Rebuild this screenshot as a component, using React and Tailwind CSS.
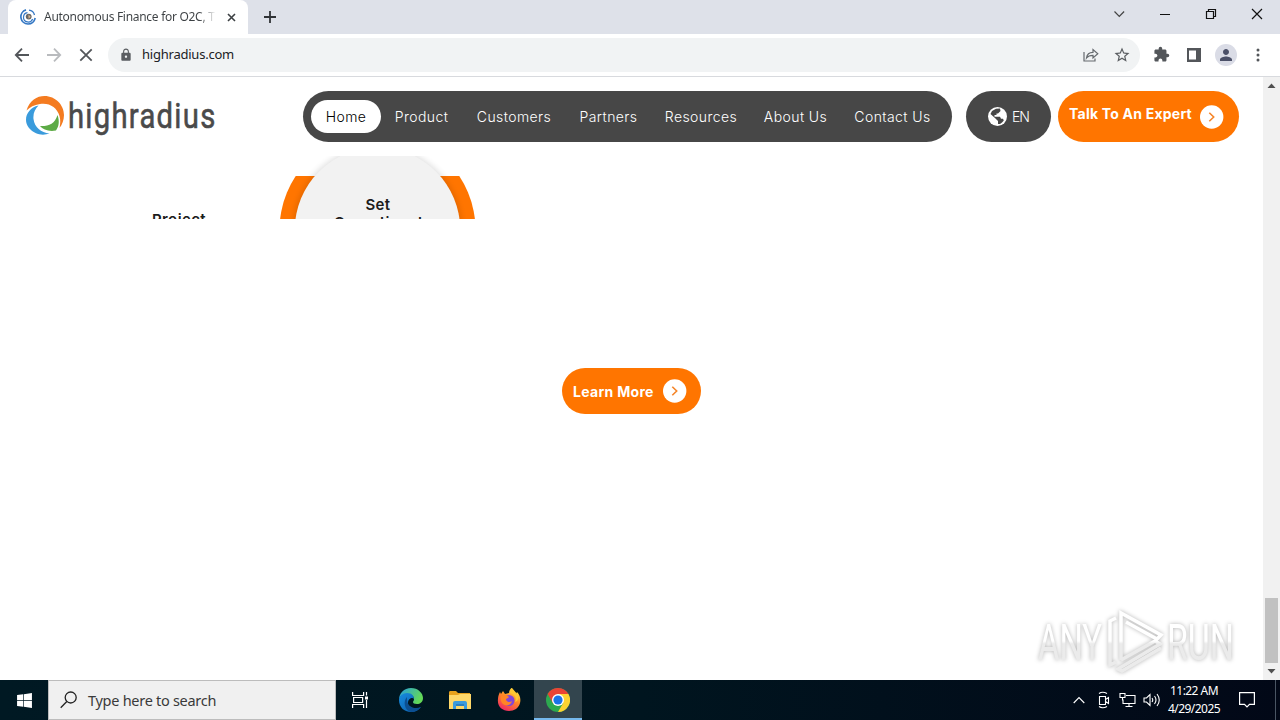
import React from 'react';
import { FaWindows } from 'react-icons/fa';
import { MdExtension, MdLock, MdPerson, MdStarBorder } from 'react-icons/md';

const navItems = [
    { label: 'Home', box: 'w-[70px] h-[33px] rounded-full bg-white text-black' },
    { label: 'Product', box: 'w-[81px] text-white' },
    { label: 'Customers', box: 'w-[104px] text-white' },
    { label: 'Partners', box: 'w-[85px] text-white' },
    { label: 'Resources', box: 'w-[100px] text-white' },
    { label: 'About Us', box: 'w-[89px] text-white' },
    { label: 'Contact Us', box: 'w-[105px] text-white' },
];

function TabStrip() {
    return (
        <div className="flex h-[34px] bg-[#dee1e9]">
            <div className="ml-2 flex h-[34px] w-[240px] items-center rounded-t-lg bg-white pl-3">
                <svg width="16" height="16" viewBox="0 0 16 16" fill="none" className="shrink-0">
                    <path d="M6 .9A7.200 7.200 0 1 0 15.200 9" stroke="#3578c4" strokeWidth="1.700" />
                    <path d="M7.500 3.700A4.700 4.700 0 1 0 12.600 10" stroke="#3578c4" strokeWidth="1.200" />
                    <path d="M9 1.200A6.500 6.500 0 0 1 14.500 6" stroke="#3578c4" strokeWidth="1.300" />
                    <circle cx="8.700" cy="7.600" r="2.900" fill="#666" />
                    <path d="M8.500 5.600l2.200 2.200-2.200 2z" fill="#d8b48c" />
                </svg>
                <div className="ml-2 w-[172px] overflow-hidden whitespace-nowrap bg-gradient-to-r from-[#3c4043] from-[90%] to-transparent bg-clip-text font-['Noto_Sans',sans-serif] text-[12px] tracking-[-0.29px] text-transparent">
                    Autonomous Finance for O2C, T
                </div>
                <svg width="9" height="9" viewBox="0 0 9 9" className="ml-[11px] shrink-0" stroke="#3c4043" strokeWidth="1.600">
                    <path d="M1 1l7 7M8 1l-7 7" />
                </svg>
            </div>
            <svg width="12" height="12" viewBox="0 0 12 12" className="ml-4 mt-[11px]" stroke="#303337" strokeWidth="1.800">
                <path d="M6 0v12M0 6h12" />
            </svg>
            <div className="ml-auto flex h-[28px] items-center">
                <svg width="166" height="28" viewBox="0 0 166 28" fill="none" stroke="#111" strokeWidth="1">
                    <path d="M0.500 11.500l4.800 5 4.800-5" stroke="#444" strokeWidth="1.200" />
                    <path d="M46 14.500h10" />
                    <path d="M92.500 11.500h7v7h-7zM94.500 11v-1.500h7v7h-1.500" strokeWidth="1.200" />
                    <path d="M138 9l10 10M148 9l-10 10" strokeWidth="1.200" />
                </svg>
            </div>
        </div>
    );
}

function Toolbar() {
    return (
        <div className="flex h-[43px] items-center border-b border-[#d8dade] bg-white pb-px">
            <svg width="80" height="16" viewBox="0 0 80 16" fill="none" className="ml-[14px] shrink-0" strokeWidth="1.800">
                <path d="M15 8H2M8 1.700L1.800 8 8 14.300" stroke="#53565a" />
                <path d="M33 8h13M40 1.700L46.200 8 40 14.300" stroke="#b9bbbe" />
                <path d="M66.300 2.300l11.400 11.400M77.700 2.300L66.300 13.700" stroke="#53565a" />
            </svg>
            <div className="ml-[14px] flex h-[34px] w-[1032px] items-center rounded-full bg-[#f1f3f4] pl-[11px] pr-[9px]">
                <MdLock size={14} color="#5a5d61" />
                <span className="ml-[9px] pt-px font-['Noto_Sans',sans-serif] text-[13px] tracking-[-0.23px] text-[#202124]">highradius.com</span>
                <svg width="16" height="14" viewBox="0 0 16 14" fill="none" stroke="#666a6e" strokeWidth="1.200" className="ml-auto">
                    <path d="M1 4v9h11v-2.500" />
                    <path d="M3.500 10C4 6 6 4.300 10 4.300V1.500l4.800 4.300L10 10V7.300C7 7.300 5 8 3.500 10z" />
                </svg>
                <MdStarBorder size={18} color="#5a5d61" className="ml-[14px]" />
            </div>
            <MdExtension size={17} color="#53565a" className="ml-[13px]" />
            <svg width="14" height="14" viewBox="0 0 14 14" className="ml-[17px]">
                <path fill="#53565a" fillRule="evenodd" d="M0 0h14v14H0zM2 2.500v9h7v-9z" />
            </svg>
            <div className="ml-[14px] flex size-[22px] items-center justify-center rounded-full bg-[#dadce6]">
                <MdPerson size={18} color="#4b5068" />
            </div>
            <svg width="4" height="14" viewBox="0 0 4 14" fill="#53565a" className="ml-[19px]">
                <circle cx="2" cy="2" r="1.500" />
                <circle cx="2" cy="7" r="1.500" />
                <circle cx="2" cy="12" r="1.500" />
            </svg>
        </div>
    );
}

function Logo() {
    return (
        <svg width="200" height="44" viewBox="0 0 200 44" className="shrink-0">
            <path d="M2.500 15.500C5.500 5.500 13 1 20.500 1 31.500 1 40 10 40 20c0 5-2 10-4.500 13 .8-4 1.200-8 0-12C33 12.500 25.500 7.500 16 9 10 10 6 12 2.500 15.500z" fill="#f47b20" />
            <path d="M14.500 10.500C3 13-1.500 25 5 33c5.500 6.500 13.500 8 20.500 5.500-8.500-1-15-6-16-14.500-.6-5.500 1.500-10 5-13.500z" fill="#3a9bdc" />
            <path d="M33.500 20c2.500 7 1 12-1.500 15.500-7 1.500-13-1-16-4.500 8 .5 15-2 17.500-11z" fill="#5dab46" />
            <text x="44" y="33" fontFamily="Roboto, sans-serif" fontSize="34.500" fontWeight="400" letterSpacing="1.500" fill="#4a4a4a" stroke="#4a4a4a" strokeWidth=".6" strokeLinejoin="round" textLength="148.500" lengthAdjust="spacingAndGlyphs">highradius</text>
        </svg>
    );
}

function ArrowDot() {
    return (
        <svg width="24" height="24" viewBox="0 0 24 24" fill="none">
            <circle cx="11.700" cy="12" r="11.700" fill="#fff" />
            <path d="M9.300 7.700l4.400 4.300-4.400 4.300" stroke="#f58529" strokeWidth="1.600" />
        </svg>
    );
}

function SiteHeader() {
    return (
        <header className="flex h-[79px] pt-[14px]">
            <div className="w-[303px] pl-6 pt-[4px]">
                <Logo />
            </div>
            <nav className="flex h-[51px] w-[649px] items-center rounded-full bg-[#474747] pl-2 font-[Inter,sans-serif] text-[14px] font-light">
                {navItems.map(item => (
                    <a key={item.label} className={`flex items-center justify-center whitespace-nowrap pb-px tracking-[0.42px] ${item.box}`}>
                        {item.label}
                    </a>
                ))}
            </nav>
            <div className="ml-[14px] flex h-[51px] w-[85px] items-center rounded-full bg-[#474747] pl-[22px] font-[Inter,sans-serif] text-[14px] font-light text-white">
                <svg width="19" height="19" viewBox="0 0 19 19">
                    <circle cx="9.500" cy="9.500" r="9.500" fill="#fff" />
                    <path d="M8 1.800L12 1.500 12.500 4 10 6.500H8.500V8H6.500v1.800H12l1 2h2l.8 1.700-1.800 2-2 1.500H10V14L7.500 11.500 2.500 7 4 4z" fill="#474747" />
                </svg>
                <span className="ml-[5px] pb-px tracking-[-1.100px]">EN</span>
            </div>
            <button className="ml-[7px] flex h-[51px] w-[181px] items-center rounded-full bg-[#ff7500] pl-[11px] text-white">
                <span className="w-[131px] whitespace-nowrap pb-[6px] text-left font-[Inter,sans-serif] text-[14px] font-bold tracking-[0.22px]">Talk To An Expert</span>
                <ArrowDot />
            </button>
        </header>
    );
}

// Steps diagram, only its first strip has painted so far
function Steps() {
    return (
        <section className="relative h-[63px] overflow-hidden font-[Inter,sans-serif] text-[15px] font-semibold text-[#1c1c1c]">
            <svg width="220" height="63" viewBox="0 0 220 63" className="absolute left-[268px] top-0">
                <defs>
                    <clipPath id="ring"><rect x="0" y="20" width="220" height="43" /></clipPath>
                    <filter id="soft" x="-20%" y="-20%" width="140%" height="140%"><feGaussianBlur stdDeviation="3" /></filter>
                </defs>
                <circle cx="109.500" cy="74" r="98" fill="#ff7500" clipPath="url(#ring)" />
                <circle cx="109.500" cy="74" r="84" fill="#000" opacity=".13" filter="url(#soft)" />
                <circle cx="109.500" cy="74" r="82.700" fill="#f2f2f2" />
            </svg>
            <div className="absolute left-[152px] top-[54px] leading-5 tracking-[0.4px]">Project</div>
            <div className="absolute left-[317px] top-[40px] w-[122px] text-center leading-[18px] tracking-[0.4px]">Set<br />Operational</div>
        </section>
    );
}

function Scrollbar() {
    return (
        <div className="flex w-[17px] flex-col items-center bg-[#f1f1f1]">
            <svg width="9" height="5" viewBox="0 0 9 5" className="mt-[6px]"><path d="M.5 5L4.500 .5 8.500 5z" fill="#505050" /></svg>
            <div className="mt-auto h-[65px] w-[13px] bg-[#c1c1c1]" />
            <svg width="9" height="5" viewBox="0 0 9 5" className="mb-[6px] mt-[6px]"><path d="M.5 0L4.500 4.500 8.500 0z" fill="#505050" /></svg>
        </div>
    );
}

function Watermark() {
    return (
        <svg width="216" height="70" viewBox="0 0 216 70" className="absolute bottom-[4px] right-[27px] drop-shadow-[0_0_2px_rgba(0,0,0,0.3)]">
            <defs>
                <linearGradient id="fade" x1="0" y1="0" x2="0" y2="70" gradientUnits="userSpaceOnUse">
                    <stop offset=".5" stopColor="#fff" />
                    <stop offset=".54" stopColor="#ebebeb" />
                </linearGradient>
            </defs>
            <g fontFamily="Roboto, sans-serif" fontSize="50" fill="url(#fade)">
                <text x="18" y="54" textLength="64" lengthAdjust="spacingAndGlyphs">ANY</text>
                <text x="147" y="54" textLength="67" lengthAdjust="spacingAndGlyphs">RUN</text>
            </g>
            <g fill="none" stroke="url(#fade)" strokeWidth="3.500">
                <path d="M101 54V7l40 22-4 4-31-17" />
                <path d="M96 12l-6 3v44l6-3" />
                <path d="M101 54l34-19 5 3-42 25 4 2 39-23" />
            </g>
        </svg>
    );
}

function EdgeIcon() {
    return (
        <svg width="24" height="24" viewBox="0 0 24 24">
            <defs>
                <linearGradient id="edgeTop" x1="0" y1="0" x2="1" y2=".4">
                    <stop stopColor="#249de3" />
                    <stop offset="1" stopColor="#63d957" />
                </linearGradient>
                <linearGradient id="edgeLow" x1="0" y1="0" x2="1" y2="1">
                    <stop stopColor="#178ce0" />
                    <stop offset="1" stopColor="#0b5aa5" />
                </linearGradient>
            </defs>
            <path d="M0 12C0 5 5 0 12 0s12 5 12 10c0 4-3 6-6 6s-4-1-4-2c0-1 1-1 1-3 0-3-3-5-7-5-4 0-8 3-8 6z" fill="url(#edgeTop)" />
            <path d="M0 12c0-4 4-7 8-7 5 0 7 3 7 6-1-2-6-1-6 4 0 4 5 7 11 5l2-1c-2 3-6 5-10 5C5 24 0 19 0 12z" fill="url(#edgeLow)" />
            <path d="M8 9c-4 4-3 13 4 15 4 0 8-2 10-5-4 2-9 1-11-1-3-2-3-6-3-9z" fill="#0c4f91" />
        </svg>
    );
}

function ExplorerIcon() {
    return (
        <svg width="22" height="19" viewBox="0 0 22 19">
            <path d="M0 1.500Q0 0 1 0h6l2 2h12v4H0z" fill="#e8a21c" />
            <path d="M0 4h9l2-1h11v15H0z" fill="#ffd869" />
            <path d="M4 18v-6q0-2 2-2h10q2 0 2 2v6h-3v-3H7v3z" fill="#3c9bdc" />
            <path d="M7 13h8v2H7z" fill="#2d7fbd" />
        </svg>
    );
}

function FirefoxIcon() {
    return (
        <svg width="24" height="24" viewBox="0 0 24 24">
            <defs>
                <linearGradient id="fox" x1=".8" y1="0" x2=".25" y2="1">
                    <stop stopColor="#fff04a" />
                    <stop offset=".45" stopColor="#ff8a26" />
                    <stop offset="1" stopColor="#f02566" />
                </linearGradient>
            </defs>
            <path d="M3 4l1 2 2-3 2 3 4-1C12 2 14 0 15 0c0 3 3 3 4 6l1-2c3 3 4 7 3 11-1 5-6 8-11 8C5 23 0 18 1 11c0-3 1-5 2-7z" fill="url(#fox)" />
            <circle cx="12" cy="12.500" r="5.500" fill="#8246d8" />
            <path d="M4 8c3-2 6-1 8 1 0 1-3 1-3 3 1 2 4 3 6 1-1 4-5 6-9 3-2-2-3-5-2-8z" fill="#ff8525" />
            <path d="M13 5c5 1 7 5 5 9 3-1 4-4 3-7l-6-7c-1 2-2 3-2 5z" fill="#ffc832" />
        </svg>
    );
}

function ChromeIcon() {
    return (
        <svg width="24" height="24" viewBox="0 0 24 24">
            <circle cx="12" cy="12" r="12" fill="#2da94f" />
            <path d="M1.600 6A12 12 0 0 1 22.400 6H12L6.800 15z" fill="#ea4335" />
            <path d="M22.400 6A12 12 0 0 1 12 24l5.200-9L12 6z" fill="#fdd231" />
            <circle cx="12" cy="12" r="6" fill="#fff" />
            <circle cx="12" cy="12" r="4.600" fill="#1a73e8" />
        </svg>
    );
}

function Taskbar() {
    return (
        <footer className="flex h-10 bg-gradient-to-r from-[#001923] via-[#00151f] to-[#020817] font-['Noto_Sans',sans-serif]">
            <div className="flex w-12 items-center justify-center">
                <FaWindows size={17} color="#fff" />
            </div>
            <div className="flex h-10 w-[288px] items-center border border-[#bcbcbc] bg-[#f0f0f0] pl-[11px]">
                <svg width="18" height="18" viewBox="0 0 18 18" fill="none" stroke="#222" strokeWidth="1.300">
                    <circle cx="10.700" cy="6.500" r="5.500" />
                    <path d="M6.800 10.500L.7 16.700" />
                </svg>
                <span className="ml-[10px] pt-px text-[14.500px] tracking-[-0.28px] text-[#3a3a3a]">Type here to search</span>
            </div>
            <div className="flex w-[49px] items-center justify-center">
                <svg width="17" height="16" viewBox="0 0 17 16" fill="none" stroke="#fff" strokeWidth="1.200">
                    <path d="M.6 0v3.500h11V0M.6 16v-3.500h11V16M1.600 5.500h9v5h-9zM14.500 0v3.500M14.500 8v8" />
                    <path d="M13 4.500h3v3h-3z" fill="#fff" stroke="none" />
                </svg>
            </div>
            <div className="flex w-[51px] items-center justify-center"><EdgeIcon /></div>
            <div className="flex w-[48px] items-center justify-center"><ExplorerIcon /></div>
            <div className="flex w-[50px] items-center justify-center"><FirefoxIcon /></div>
            <div className="flex w-12 items-center justify-center border-b-2 border-[#76b9ed] bg-[#33454e] pt-[2px]"><ChromeIcon /></div>
            <div className="ml-auto flex items-center">
                <svg width="88" height="18" viewBox="0 0 88 18" fill="none" stroke="#fff" strokeWidth="1.100">
                    <path d="M.7 12L6 6.500l5.300 5.500" />
                    <path d="M26.500 5.500h6v8h-6zM32.500 8.500l3-2v6l-3-2M26 2.500q3.500-2.500 8 0M26 15.500q3.500 2.500 8 0" />
                    <path d="M53 4.500h9v8h-12v-4M56 12.500v3M52.500 15.500h7M47 2.500h5v4h-5zM49.500 6.500v3" />
                    <path d="M71 7h2.500l3.500-3.500v11L73.500 11H71zM79 7q1.500 2 0 4M81.500 5q3 4 0 8M84 3q4.500 6 0 12" />
                </svg>
                <div className="ml-[1px] w-[64px] whitespace-nowrap text-center text-[12px] leading-[18px] tracking-[-0.550px] text-white">
                    11:22 AM<br />4/29/2025
                </div>
                <svg width="16" height="16" viewBox="0 0 16 16" fill="none" stroke="#fff" strokeWidth="1.200" className="ml-[13px]">
                    <path d="M.6 .6h14.800v11.800h-4.900L8 15l-2.500-2.600H.6z" />
                </svg>
                <div className="ml-[20px] mr-1 h-10 w-px bg-[#4a5563]" />
            </div>
        </footer>
    );
}

export default function App() {
    return (
        <div className="flex h-[720px] w-[1280px] flex-col overflow-hidden bg-white">
            <TabStrip />
            <Toolbar />
            <div className="flex h-[603px]">
                <main className="relative flex-1 bg-white">
                    <SiteHeader />
                    <Steps />
                    <div className="flex pl-[562px] pt-[149px]">
                        <button className="flex h-[46px] w-[139px] items-center rounded-full bg-[#ff7500] pl-[11px] text-white">
                            <span className="w-[90px] whitespace-nowrap text-left font-[Inter,sans-serif] text-[14px] font-bold tracking-[0.3px]">Learn More</span>
                            <ArrowDot />
                        </button>
                    </div>
                    <Watermark />
                </main>
                <Scrollbar />
            </div>
            <Taskbar />
        </div>
    );
}
